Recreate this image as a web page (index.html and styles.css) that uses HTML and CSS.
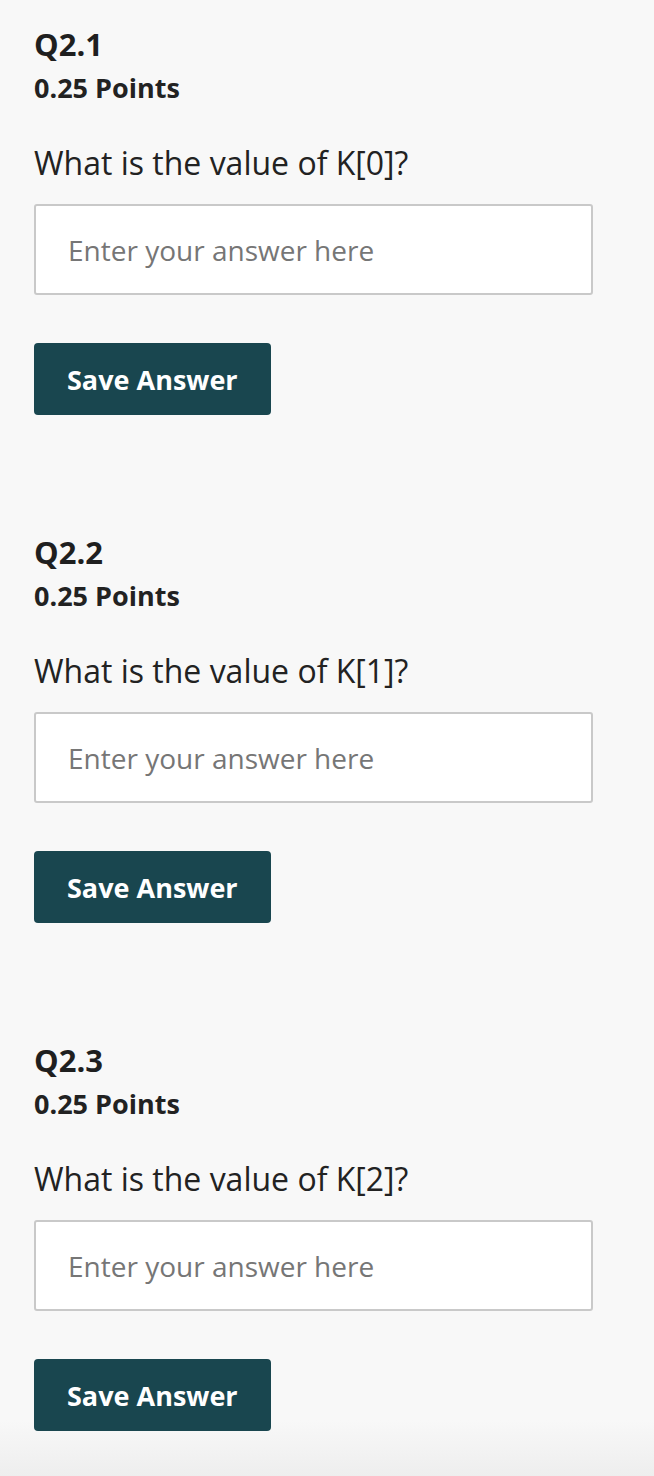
FILE: index.html
```html
<!DOCTYPE html>
<html>
<head>
<meta charset="utf-8">
<link rel="stylesheet" href="styles.css">
</head>
<body>
<main class="page">
  <section class="question">
    <h2 class="q-title">Q2.1</h2>
    <div class="q-points">0.25 Points</div>
    <p class="q-text">What is the value of K[0]?</p>
    <input class="q-input" type="text" placeholder="Enter your answer here">
    <button class="q-save">Save Answer</button>
  </section>
  <section class="question">
    <h2 class="q-title">Q2.2</h2>
    <div class="q-points">0.25 Points</div>
    <p class="q-text">What is the value of K[1]?</p>
    <input class="q-input" type="text" placeholder="Enter your answer here">
    <button class="q-save">Save Answer</button>
  </section>
  <section class="question">
    <h2 class="q-title">Q2.3</h2>
    <div class="q-points">0.25 Points</div>
    <p class="q-text">What is the value of K[2]?</p>
    <input class="q-input" type="text" placeholder="Enter your answer here">
    <button class="q-save">Save Answer</button>
  </section>
</main>
</body>
</html>
```

FILE: styles.css
```css
html, body {
  margin: 0;
  padding: 0;
}
body {
  background: linear-gradient(to bottom, #f8f8f8 0, #f8f8f8 1420px, #eeeeee 1476px);
  min-height: 1476px;
  font-family: "Open Sans", "Liberation Sans", sans-serif;
  color: #1f1f1f;
}
.page {
  padding: 24px 61px 0 34px;
  display: flex;
  flex-direction: column;
}
.question {
  display: flex;
  flex-direction: column;
  align-items: flex-start;
  padding-bottom: 117px;
}
.q-title {
  margin: 0;
  font-size: 31px;
  font-weight: 700;
  line-height: 40px;
}
.q-points {
  margin-top: 6px;
  font-size: 27px;
  font-weight: 700;
  line-height: 36px;
  color: #222;
}
.q-text {
  margin: 35px 0 0;
  font-size: 32px;
  line-height: 44px;
  color: #222;
}
.q-input {
  box-sizing: border-box;
  margin-top: 19px;
  width: 559px;
  height: 91px;
  border: 2px solid #c9c9c9;
  border-radius: 3px;
  background: #fff;
  padding: 0 32px;
  font-family: "Open Sans", "Liberation Sans", sans-serif;
  font-size: 28px;
  color: #222;
  outline: none;
}
.q-input::placeholder {
  color: #767676;
  opacity: 1;
}
.q-save {
  margin-top: 48px;
  height: 72px;
  padding: 0 33px;
  border: none;
  border-radius: 4px;
  background: #19464f;
  color: #fff;
  font-family: "Open Sans", "Liberation Sans", sans-serif;
  font-size: 27px;
  font-weight: 700;
  cursor: pointer;
}
```
